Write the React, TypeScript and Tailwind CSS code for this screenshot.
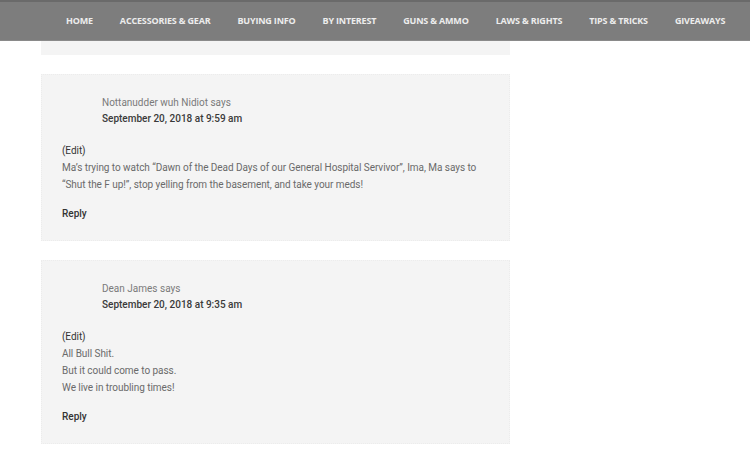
// Comment thread page: top nav and a column of comment cards.
const navItems = [
  'Home',
  'Accessories & Gear',
  'Buying Info',
  'By Interest',
  'Guns & Ammo',
  'Laws & Rights',
  'Tips & Tricks',
  'Giveaways',
];

type Comment = {
  author: string;
  date: string;
  lines: string[];
};

const comments: Comment[] = [
  {
    author: 'Nottanudder wuh Nidiot',
    date: 'September 20, 2018 at 9:59 am',
    lines: [
      'Ma’s trying to watch “Dawn of the Dead Days of our General Hospital Servivor”, Ima, Ma says to “Shut the F up!”, stop yelling from the basement, and take your meds!',
    ],
  },
  {
    author: 'Dean James',
    date: 'September 20, 2018 at 9:35 am',
    lines: ['All Bull Shit.', 'But it could come to pass.', 'We live in troubling times!'],
  },
];

function CommentCard({ c }: { c: Comment }) {
  return (
    <div className="w-[469px] bg-[#f4f4f4] border border-dotted border-[#ececec] pl-5 pr-5 pt-5 pb-[18px]">
      <div className="pl-10 text-[10px] leading-[16px]">
        <div className="text-[#7a7a7a]">{c.author} says</div>
        <div className="text-[#3a3a3a] font-medium">{c.date}</div>
      </div>
      <div className="mt-[15px] text-[10px] leading-[17px] text-[#6a6a6a] tracking-[-0.005em]">
        <div className="text-[#333]">(Edit)</div>
        {c.lines.map((l) => (
          <p key={l}>{l}</p>
        ))}
      </div>
      <div className="mt-[12px] text-[10px] leading-[17px] text-[#333] font-medium">Reply</div>
    </div>
  );
}

export default function App() {
  return (
    <div className="min-h-screen w-[750px] h-[454px] overflow-hidden bg-white font-['Roboto',sans-serif]">
      <nav className="h-[41px] bg-[#7d7d7d] border-t-2 border-[#6a6a6a] border-b border-b-[#8a8a8a] flex items-center pl-[66px] gap-[27px]">
        {navItems.map((n) => (
          <a
            key={n}
            href="#"
            className="uppercase text-[9px] font-bold tracking-[-0.02em] text-[#ededed] font-['Open_Sans',sans-serif] whitespace-nowrap"
          >
            {n}
          </a>
        ))}
      </nav>

      <div className="pl-[41px] flex flex-col gap-[19px]">
        <div className="w-[469px] h-[14px] bg-[#f4f4f4]" />
        {comments.map((c) => (
          <CommentCard key={c.author} c={c} />
        ))}
      </div>
    </div>
  );
}
